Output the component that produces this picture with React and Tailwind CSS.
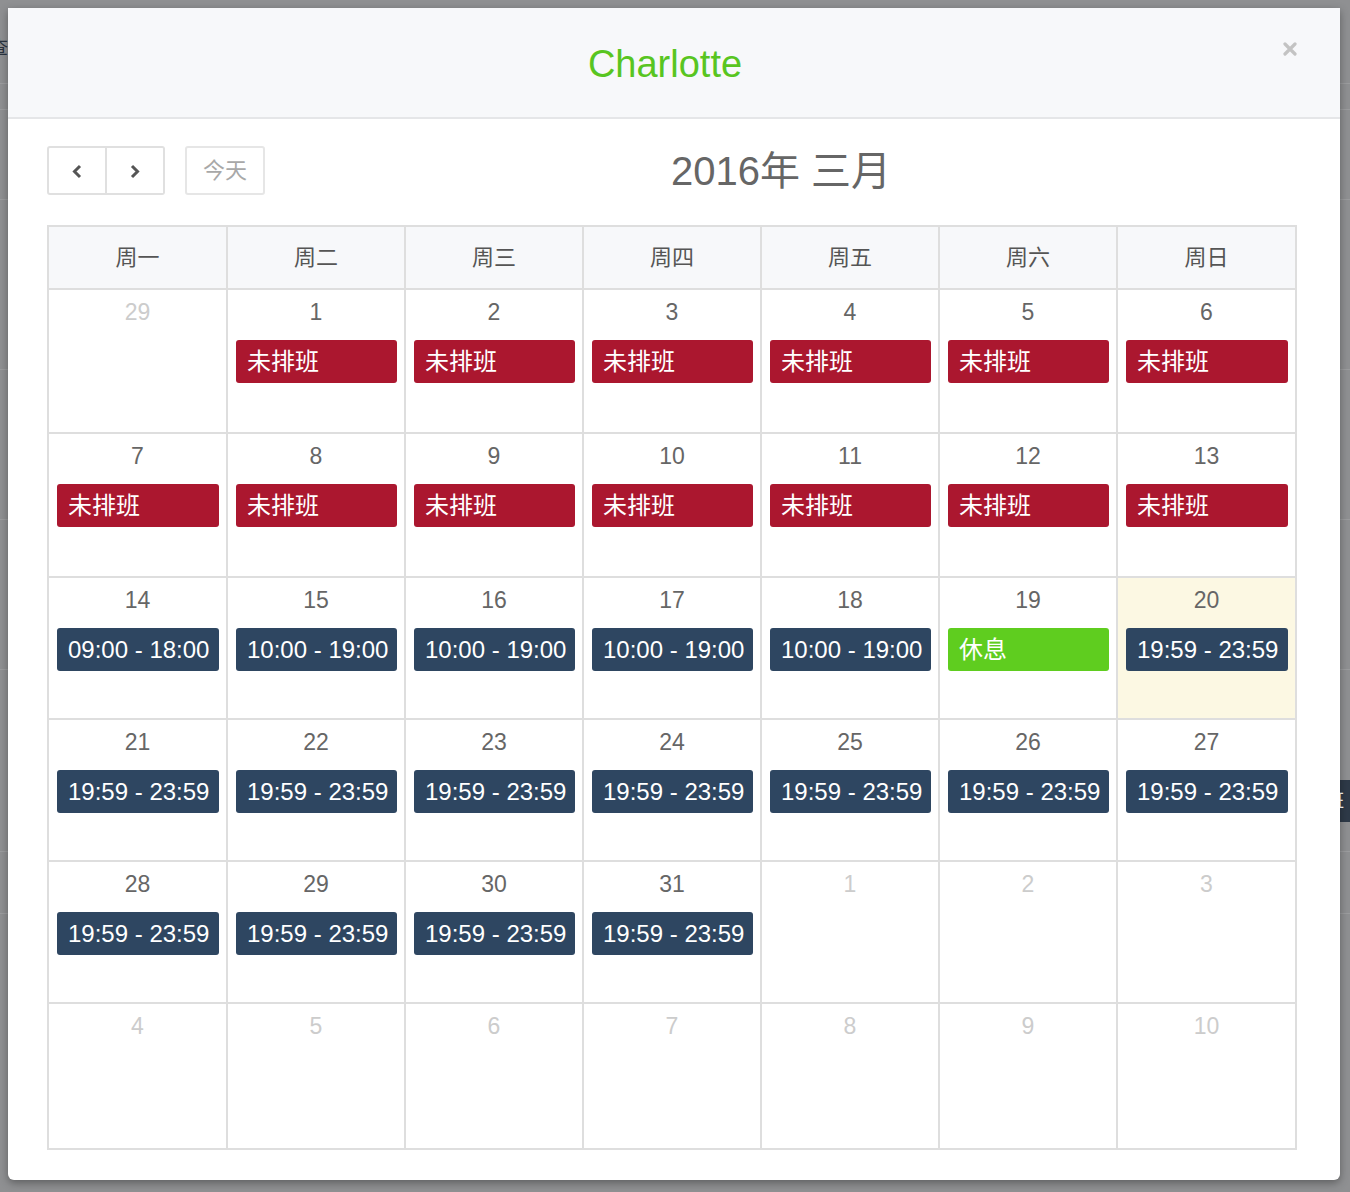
import React from "react";

const FONT = { fontFamily: '"Liberation Sans", Arial, "Noto Sans CJK SC", sans-serif' };

const RED = "未排班";
const rows = [
  { h: "h-[144px]", days: [[29, true], [1, false, "r", RED], [2, false, "r", RED], [3, false, "r", RED], [4, false, "r", RED], [5, false, "r", RED], [6, false, "r", RED]] },
  { h: "h-[144px]", days: [[7, false, "r", RED], [8, false, "r", RED], [9, false, "r", RED], [10, false, "r", RED], [11, false, "r", RED], [12, false, "r", RED], [13, false, "r", RED]] },
  { h: "h-[142px]", days: [[14, false, "b", "09:00 - 18:00"], [15, false, "b", "10:00 - 19:00"], [16, false, "b", "10:00 - 19:00"], [17, false, "b", "10:00 - 19:00"], [18, false, "b", "10:00 - 19:00"], [19, false, "g", "休息"], [20, false, "b", "19:59 - 23:59", true]] },
  { h: "h-[142px]", days: [21, 22, 23, 24, 25, 26, 27].map((d) => [d, false, "b", "19:59 - 23:59"]) },
  { h: "h-[142px]", days: [[28, false, "b", "19:59 - 23:59"], [29, false, "b", "19:59 - 23:59"], [30, false, "b", "19:59 - 23:59"], [31, false, "b", "19:59 - 23:59"], [1, true], [2, true], [3, true]] },
  { h: "h-[146px]", days: [4, 5, 6, 7, 8, 9, 10].map((d) => [d, true]) },
];

const weekdays = ["周一", "周二", "周三", "周四", "周五", "周六", "周日"];

const eventClass = {
  r: "bg-[#ab172f]",
  b: "bg-[#2e4661]",
  g: "bg-[#5fcd1f]",
};

const COLS = "grid grid-cols-[179px_178px_178px_178px_178px_178px_179px]";

const Cell = ({ day }) => {
  const [d, other, type, text, today] = day;
  return (
    <div className={`border-r-2 border-b-2 border-[#dedede] flex flex-col ${today ? "bg-[#fcf8e3]" : "bg-white"}`}>
      <div className={`h-[44px] flex items-center justify-center text-[23px] ${other ? "text-[#cccccc]" : "text-[#666666]"}`}>
        {d}
      </div>
      {type && (
        <div className={`mt-[6px] ml-[8px] mr-[7px] h-[43px] rounded-[3px] flex items-center pl-[11px] text-white text-[24px] whitespace-nowrap overflow-hidden ${eventClass[type]}`}>
          {text}
        </div>
      )}
    </div>
  );
};

export default function App() {
  return (
    <div className="relative h-[1192px] w-full bg-[#8f9092] overflow-hidden" style={FONT}>
      {/* page behind the overlay */}
      <div className="flex flex-col">
        <div className="h-[34px]" />
        <div className="h-[28px] flex items-center text-[#2a3440] text-[18px] -ml-[10px]">查看</div>
        <div className="h-[22px] border-b border-[#9c9d9f]" />
        <div className="h-[26px] border-b border-[#9c9d9f]" />
        <div className="h-[90px] border-b border-[#9c9d9f]" />
        <div className="h-[170px] border-b border-[#9c9d9f]" />
        <div className="h-[150px] border-b border-[#9c9d9f]" />
        <div className="h-[150px] border-b border-[#9c9d9f]" />
        <div className="h-[110px]" />
        <div className="h-[42px] flex justify-end">
          <div className="w-[24px] bg-[#2e3a48] flex items-center text-white text-[18px]">
            <span>班</span>
          </div>
        </div>
        <div className="h-[30px] border-b border-[#9c9d9f]" />
        <div className="h-[62px] border-b border-[#9c9d9f]" />
      </div>

      {/* modal */}
      <div className="absolute left-[8px] top-[8px] w-[1332px] h-[1172px] bg-white rounded-b-[6px] shadow-[0_3px_8px_rgba(0,0,0,0.35)] flex flex-col">
        <div className="relative h-[111px] bg-[#f7f8fa] border-b-2 border-[#e5e6e8] flex items-center justify-center">
          <h1 className="text-[38px] text-[#58c521] leading-none mt-[3px] mr-[18px]">Charlotte</h1>
          <button className="absolute right-[43px] top-[34px] w-[14px] h-[14px]">
            <svg viewBox="0 0 14 14" width="14" height="14">
              <path d="M2 2 L12 12 M12 2 L2 12" stroke="#c3c3c3" strokeWidth="3.2" strokeLinecap="round" />
            </svg>
          </button>
        </div>

        <div className="pl-[39px] pt-[27px]">
          <div className="w-[1250px] flex items-center h-[49px]">
            <div className="flex">
              <button className="w-[60px] h-[49px] border-2 border-[#e0e0e0] rounded-l-[3px] flex items-center justify-center bg-white">
                <svg width="14" height="16" viewBox="0 0 14 16">
                  <polyline points="10,3 4.5,8.5 10,14" fill="none" stroke="#555" strokeWidth="3" />
                </svg>
              </button>
              <button className="w-[58px] h-[49px] border-2 border-l-0 border-[#e0e0e0] rounded-r-[3px] flex items-center justify-center bg-white">
                <svg width="14" height="16" viewBox="0 0 14 16">
                  <polyline points="4,3 9.5,8.5 4,14" fill="none" stroke="#555" strokeWidth="3" />
                </svg>
              </button>
            </div>
            <button className="ml-[20px] w-[80px] h-[49px] border-2 border-[#e6e6e6] rounded-[3px] text-[22px] text-[#a8a8a8] bg-white">
              今天
            </button>
            <div className="flex-1 text-center text-[40px] text-[#666666] leading-none">2016年 三月</div>
          </div>

          <div className="mt-[30px] w-[1250px] border-l-2 border-t-2 border-[#dedede]">
            <div className={`${COLS} h-[63px] bg-[#f7f8fa]`}>
              {weekdays.map((w) => (
                <div key={w} className="border-r-2 border-b-2 border-[#dedede] flex items-center justify-center text-[22px] text-[#555555]">
                  {w}
                </div>
              ))}
            </div>
            {rows.map((row, i) => (
              <div key={i} className={`${COLS} ${row.h}`}>
                {row.days.map((day, j) => (
                  <Cell key={j} day={day} />
                ))}
              </div>
            ))}
          </div>
        </div>
      </div>
    </div>
  );
}
